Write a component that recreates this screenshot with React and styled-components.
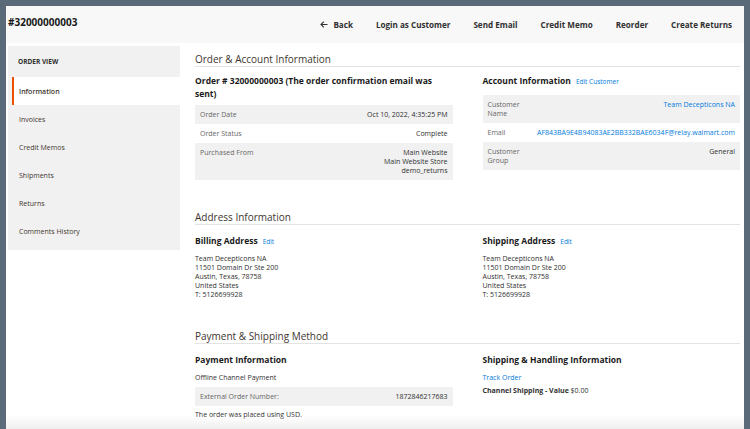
import React from 'react';
import styled, { createGlobalStyle } from 'styled-components';

const GlobalStyle = createGlobalStyle`
  * { box-sizing: border-box; }
  body {
    margin: 0;
    background: #5b6a78;
    font-family: 'Open Sans', 'Liberation Sans', sans-serif;
    color: #303030;
  }
`;

const Frame = styled.div`
  padding: 6px 6px 0 6px;
`;

const Screen = styled.div`
  background: #fff;
  min-height: 423px;
  padding: 0 4px 0 2px;
`;

const Header = styled.div`
  display: flex;
  align-items: center;
  height: 37px;
  background: #f8f8f8;
  margin: 0 -4px 0 -2px;
  padding: 0 12px 0 2px;
`;

const Title = styled.h1`
  margin: 0 auto 5px 0;
  font-size: 10px;
  font-weight: 700;
  color: #1a1a1a;
`;

const Actions = styled.div`
  display: flex;
  align-items: center;
  gap: 23px;
`;

const ActionButton = styled.span`
  display: inline-flex;
  align-items: center;
  gap: 5px;
  font-size: 8.1px;
  font-weight: 700;
  color: #303030;
  white-space: nowrap;
`;

const Body = styled.div`
  display: flex;
  align-items: flex-start;
  gap: 15px;
  margin-top: 3px;
`;

const Sidebar = styled.nav`
  width: 172px;
  flex-shrink: 0;
  background: #f1f1f1;
  padding-bottom: 5px;
`;

const SidebarTitle = styled.div`
  height: 31px;
  display: flex;
  align-items: center;
  padding-left: 10px;
  font-size: 6.5px;
  font-weight: 700;
  text-transform: uppercase;
  color: #303030;
`;

const NavItem = styled.div`
  height: 28px;
  display: flex;
  align-items: center;
  font-size: 7px;
  color: #41362f;
  padding-left: ${p => (p.$active ? '5px' : '11px')};
  margin-left: ${p => (p.$active ? '4px' : '0')};
  background: ${p => (p.$active ? '#fff' : 'transparent')};
  border-left: ${p => (p.$active ? '2px solid #eb5202' : 'none')};
  font-weight: ${p => (p.$active ? 600 : 400)};
`;

const Main = styled.main`
  flex: 1;
  min-width: 0;
`;

const Section = styled.section`
  & + & { margin-top: 30px; }
`;

const SectionTitle = styled.h2`
  margin: 6px 0 0;
  font-size: 10px;
  line-height: 14px;
  font-weight: 400;
  color: #41362f;
  border-bottom: 1px solid #e3e3e3;
`;

const Columns = styled.div`
  display: grid;
  grid-template-columns: 1fr 1fr;
  column-gap: 30px;
  margin-top: ${p => p.$top || 8}px;
`;

const Column = styled.div`
  min-width: 0;
`;

const BlockTitle = styled.h3`
  margin: 0 0 ${p => p.$gap || 6}px;
  font-size: 8.5px;
  line-height: 13px;
  font-weight: 700;
  color: #1a1a1a;
`;

const EditLink = styled.a`
  margin-left: 5px;
  font-size: 6.5px;
  font-weight: 400;
  color: #007bdb;
  text-decoration: none;
`;

const Table = styled.div`
  width: 100%;
  margin-top: ${p => p.$top || 0}px;
`;

const Row = styled.div`
  display: flex;
  justify-content: space-between;
  gap: 8px;
  padding: 5px;
  background: ${p => (p.$shade ? '#f1f1f1' : '#fff')};
  font-size: 7px;
  line-height: 9px;
`;

const Label = styled.div`
  color: #666;
  flex-shrink: 0;
  width: ${p => p.$width || 'auto'};
`;

const Value = styled.div`
  text-align: right;
  color: ${p => (p.$link ? '#007bdb' : '#303030')};
`;

const Text = styled.div`
  font-size: 7px;
  line-height: 9px;
  color: #303030;
  margin: ${p => p.$margin || '0'};
`;

const Link = styled.a`
  display: block;
  font-size: 7px;
  line-height: 9px;
  color: #007bdb;
  text-decoration: none;
`;

const Strong = styled.span`
  font-weight: 700;
`;

// soft fade the screenshot has along its lower edge
const Fade = styled.div`
  position: fixed;
  left: 6px;
  right: 6px;
  bottom: 0;
  height: 14px;
  background: linear-gradient(to bottom, rgba(245, 245, 245, 0), rgba(238, 238, 238, 0.9));
  pointer-events: none;
`;

const BackArrow = () => (
  <svg width="8" height="7" viewBox="0 0 8 7" fill="none" stroke="#303030" strokeWidth="1.1">
    <path d="M7.5 3.5H1M3.8 0.7L1 3.5l2.8 2.8" />
  </svg>
);

const navItems = ['Information', 'Invoices', 'Credit Memos', 'Shipments', 'Returns', 'Comments History'];

const address = [
  'Team Decepticons NA',
  '11501 Domain Dr Ste 200',
  'Austin, Texas, 78758',
  'United States',
  'T: 5126699928',
];

function Address({ lines }) {
  return (
    <div>
      {lines.map(line => (
        <Text key={line}>{line}</Text>
      ))}
    </div>
  );
}

export default function App() {
  return (
    <Frame>
      <GlobalStyle />
      <Screen>
        <Header>
          <Title>#32000000003</Title>
          <Actions>
            <ActionButton><BackArrow />Back</ActionButton>
            <ActionButton>Login as Customer</ActionButton>
            <ActionButton>Send Email</ActionButton>
            <ActionButton>Credit Memo</ActionButton>
            <ActionButton>Reorder</ActionButton>
            <ActionButton>Create Returns</ActionButton>
          </Actions>
        </Header>

        <Body>
          <Sidebar>
            <SidebarTitle>Order View</SidebarTitle>
            {navItems.map((item, i) => (
              <NavItem key={item} $active={i === 0}>{item}</NavItem>
            ))}
          </Sidebar>

          <Main>
            <Section>
              <SectionTitle>Order &amp; Account Information</SectionTitle>
              <Columns $top={7}>
                <Column>
                  <BlockTitle $gap={5}>Order # 32000000003 (The order confirmation email was sent)</BlockTitle>
                  <Table>
                    <Row $shade>
                      <Label>Order Date</Label>
                      <Value>Oct 10, 2022, 4:35:25 PM</Value>
                    </Row>
                    <Row>
                      <Label>Order Status</Label>
                      <Value>Complete</Value>
                    </Row>
                    <Row $shade>
                      <Label>Purchased From</Label>
                      <Value>Main Website<br />Main Website Store<br />demo_returns</Value>
                    </Row>
                  </Table>
                </Column>
                <Column>
                  <BlockTitle $gap={7}>
                    Account Information<EditLink>Edit Customer</EditLink>
                  </BlockTitle>
                  <Table>
                    <Row $shade>
                      <Label $width="40px">Customer Name</Label>
                      <Value $link>Team Decepticons NA</Value>
                    </Row>
                    <Row>
                      <Label $width="40px">Email</Label>
                      <Value $link>AF843BA9E4B94083AE2BB332BAE6034F@relay.walmart.com</Value>
                    </Row>
                    <Row $shade>
                      <Label $width="40px">Customer Group</Label>
                      <Value>General</Value>
                    </Row>
                  </Table>
                </Column>
              </Columns>
            </Section>

            <Section>
              <SectionTitle>Address Information</SectionTitle>
              <Columns $top={9}>
                <Column>
                  <BlockTitle>Billing Address<EditLink>Edit</EditLink></BlockTitle>
                  <Address lines={address} />
                </Column>
                <Column>
                  <BlockTitle>Shipping Address<EditLink>Edit</EditLink></BlockTitle>
                  <Address lines={address} />
                </Column>
              </Columns>
            </Section>

            <Section>
              <SectionTitle>Payment &amp; Shipping Method</SectionTitle>
              <Columns $top={9}>
                <Column>
                  <BlockTitle $gap={7}>Payment Information</BlockTitle>
                  <Text>Offline Channel Payment</Text>
                  <Table $top={5}>
                    <Row $shade>
                      <Label>External Order Number:</Label>
                      <Value>1872846217683</Value>
                    </Row>
                  </Table>
                  <Text $margin="4px 0 0">The order was placed using USD.</Text>
                </Column>
                <Column>
                  <BlockTitle $gap={7}>Shipping &amp; Handling Information</BlockTitle>
                  <Link>Track Order</Link>
                  <Text $margin="4px 0 0"><Strong>Channel Shipping - Value</Strong> $0.00</Text>
                </Column>
              </Columns>
            </Section>
          </Main>
        </Body>
      </Screen>
      <Fade />
    </Frame>
  );
}
